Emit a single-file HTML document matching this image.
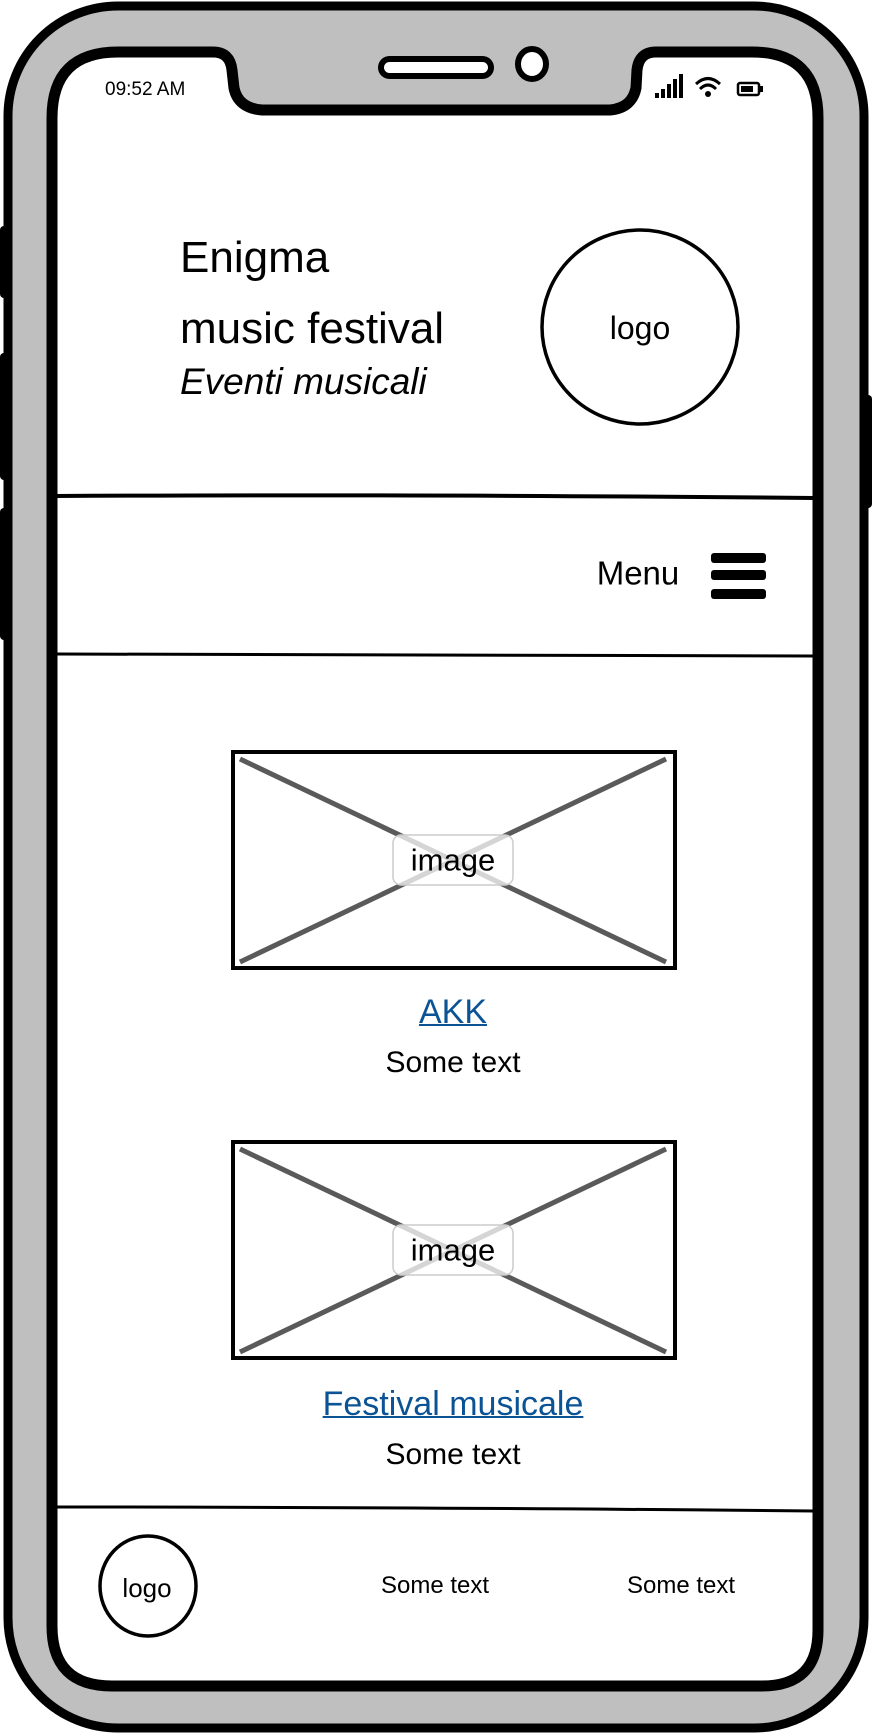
<!DOCTYPE html>
<html><head><meta charset="utf-8"><style>
html,body{margin:0;padding:0;background:#fff;}
body{width:872px;height:1734px;position:relative;overflow:hidden;font-family:"Liberation Sans",sans-serif;}
svg{position:absolute;left:0;top:0;}
.t{position:absolute;white-space:nowrap;color:#000;line-height:1;}
.c{transform:translate(-50%,-50%);}
</style></head><body>
<svg width="872" height="1734" viewBox="0 0 872 1734">
  <!-- side buttons -->
  <rect x="0" y="226" width="12" height="72" rx="4" fill="#000"/>
  <rect x="0" y="353" width="12" height="127" rx="4" fill="#000"/>
  <rect x="0" y="508" width="12" height="132" rx="4" fill="#000"/>
  <rect x="860" y="395" width="12" height="113" rx="4" fill="#000"/>
  <!-- outer body -->
  <rect x="8" y="6" width="856" height="1722" rx="110" fill="#bfbfbf" stroke="#000" stroke-width="9"/>
  <!-- screen -->
  <path d="M118 52 H213 Q230 52 232 70 L234 88 Q238 108 262 110 H610 Q632 108 636 88 L637 70 Q639 52 656 52 H752 Q818 52 818 118 V1630 Q818 1686 762 1686 H112 Q52 1686 52 1626 V118 Q52 52 118 52 Z" fill="#fff" stroke="#000" stroke-width="11"/>
  <!-- speaker & camera -->
  <rect x="381" y="59" width="110" height="17" rx="8.5" fill="#fff" stroke="#000" stroke-width="6"/>
  <ellipse cx="532" cy="64" rx="14" ry="15" fill="#fff" stroke="#000" stroke-width="6"/>
  <!-- status icons -->
  <rect x="655" y="93" width="4" height="5" fill="#000"/>
  <rect x="661" y="89" width="4" height="9" fill="#000"/>
  <rect x="667" y="84" width="4" height="14" fill="#000"/>
  <rect x="673" y="79" width="4" height="19" fill="#000"/>
  <rect x="679" y="74" width="4" height="24" fill="#000"/>
  <path d="M696 84 Q708 73 720 84" fill="none" stroke="#000" stroke-width="3"/>
  <path d="M700 89 Q708 81 716 89" fill="none" stroke="#000" stroke-width="3"/>
  <circle cx="708" cy="94" r="3" fill="#000"/>
  <rect x="738" y="83" width="21" height="12" rx="2" fill="none" stroke="#000" stroke-width="2.5"/>
  <rect x="741" y="86" width="12" height="6" fill="#000"/>
  <rect x="760" y="86" width="3" height="6" fill="#000"/>
  <!-- header logo -->
  <ellipse cx="640" cy="327" rx="98" ry="97" fill="none" stroke="#000" stroke-width="3.5"/>
  <!-- dividers -->
  <path d="M56 496 Q400 494 814 498" stroke="#000" stroke-width="4" fill="none"/>
  <path d="M56 654 Q400 654 814 656" stroke="#000" stroke-width="3" fill="none"/>
  <path d="M56 1507 Q400 1507 814 1511" stroke="#000" stroke-width="3" fill="none"/>
  <!-- hamburger -->
  <rect x="711" y="553" width="55" height="10" rx="3" fill="#000"/>
  <rect x="711" y="570" width="55" height="10" rx="3" fill="#000"/>
  <rect x="711" y="589" width="55" height="10" rx="3" fill="#000"/>
  <!-- image 1 -->
  <rect x="233" y="752" width="442" height="216" fill="#fff" stroke="#000" stroke-width="4"/>
  <path d="M240 759 L666 962 M666 759 L240 962" stroke="#5a5a5a" stroke-width="5"/>
  <rect x="393" y="835" width="120" height="50" rx="8" fill="rgba(255,255,255,0.75)" stroke="#ccc" stroke-width="1.5"/>
  <!-- image 2 -->
  <rect x="233" y="1142" width="442" height="216" fill="#fff" stroke="#000" stroke-width="4"/>
  <path d="M240 1149 L666 1352 M666 1149 L240 1352" stroke="#5a5a5a" stroke-width="5"/>
  <rect x="393" y="1225" width="120" height="50" rx="8" fill="rgba(255,255,255,0.75)" stroke="#ccc" stroke-width="1.5"/>
  <!-- footer logo -->
  <ellipse cx="148" cy="1586" rx="48" ry="50" fill="none" stroke="#000" stroke-width="3.5"/>
</svg>
<div class="t" style="left:105px;top:80px;font-size:19px;">09:52 AM</div>
<div class="t" style="left:180px;top:236px;font-size:44px;">Enigma</div>
<div class="t" style="left:180px;top:307px;font-size:44px;">music festival</div>
<div class="t" style="left:180px;top:363px;font-size:37px;font-style:italic;">Eventi musicali</div>
<div class="t c" style="left:640px;top:328px;font-size:32px;">logo</div>
<div class="t c" style="left:638px;top:573px;font-size:33px;">Menu</div>
<div class="t c" style="left:453px;top:860px;font-size:31px;">image</div>
<div class="t c" style="left:453px;top:1012px;font-size:34px;color:#0b5394;text-decoration:underline;text-decoration-thickness:2px;">AKK</div>
<div class="t c" style="left:453px;top:1063px;font-size:30px;">Some text</div>
<div class="t c" style="left:453px;top:1250px;font-size:31px;">image</div>
<div class="t c" style="left:453px;top:1404px;font-size:34px;color:#0b5394;text-decoration:underline;text-decoration-thickness:2px;">Festival musicale</div>
<div class="t c" style="left:453px;top:1455px;font-size:30px;">Some text</div>
<div class="t c" style="left:147px;top:1588px;font-size:26px;">logo</div>
<div class="t c" style="left:435px;top:1586px;font-size:24px;">Some text</div>
<div class="t c" style="left:681px;top:1586px;font-size:24px;">Some text</div>
</body></html>
